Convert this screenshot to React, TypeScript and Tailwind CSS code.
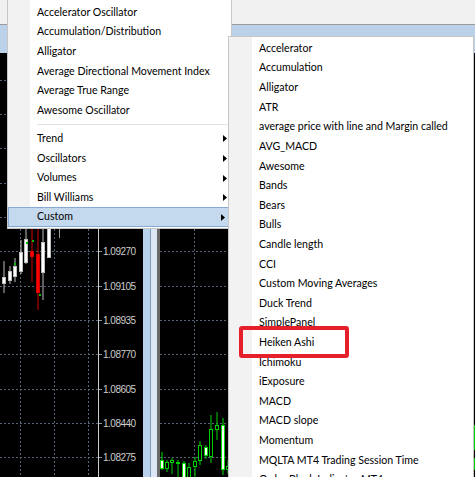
import React from 'react';

const topItems = [
  'Accelerator Oscillator',
  'Accumulation/Distribution',
  'Alligator',
  'Average Directional Movement Index',
  'Average True Range',
  'Awesome Oscillator',
];

const groupItems = ['Trend', 'Oscillators', 'Volumes', 'Bill Williams', 'Custom'];

const customItems = [
  'Accelerator',
  'Accumulation',
  'Alligator',
  'ATR',
  'average price with line and Margin called',
  'AVG_MACD',
  'Awesome',
  'Bands',
  'Bears',
  'Bulls',
  'Candle length',
  'CCI',
  'Custom Moving Averages',
  'Duck Trend',
  'SimplePanel',
  'Heiken Ashi',
  'Ichimoku',
  'iExposure',
  'MACD',
  'MACD slope',
  'Momentum',
  'MQLTA MT4 Trading Session Time',
  'Order Block Indicator MT4',
];

// grid rows shared by both charts (page y)
const gridY = [80, 114, 148, 183, 217, 251, 286, 320, 354, 389, 423, 457];
const prices = [
  { y: 251, label: '1.09270' },
  { y: 286, label: '1.09105' },
  { y: 320, label: '1.08935' },
  { y: 354, label: '1.08770' },
  { y: 389, label: '1.08605' },
  { y: 423, label: '1.08440' },
  { y: 457, label: '1.08275' },
];

type Candle = { x: number; o: number; c: number; h: number; l: number; fill: string; line: string };

const leftCandles: Candle[] = [
  { x: 2, o: 277, c: 284, h: 261, l: 293, fill: '#ffffff', line: '#bdbdbd' },
  { x: 8, o: 271, c: 281, h: 266, l: 284, fill: '#ffffff', line: '#bdbdbd' },
  { x: 13, o: 266, c: 277, h: 258, l: 282, fill: '#ffffff', line: '#bdbdbd' },
  { x: 19, o: 252, c: 272, h: 240, l: 274, fill: '#ffffff', line: '#bdbdbd' },
  { x: 24, o: 239, c: 263, h: 226, l: 264, fill: '#ffffff', line: '#bdbdbd' },
  { x: 30, o: 251, c: 257, h: 226, l: 282, fill: '#ff0000', line: '#d00000' },
  { x: 36, o: 254, c: 293, h: 226, l: 310, fill: '#ff0000', line: '#d00000' },
  { x: 41, o: 242, c: 273, h: 226, l: 300, fill: '#ffffff', line: '#bdbdbd' },
  { x: 47, o: 226, c: 258, h: 226, l: 258, fill: '#ffffff', line: '#bdbdbd' },
];

const rightCandles: Candle[] = [
  { x: 160, o: 460, c: 469, h: 452, l: 470, fill: '#ffffff', line: '#00e000' },
  { x: 165, o: 462, c: 469, h: 460, l: 472, fill: '#000000', line: '#00d000' },
  { x: 170, o: 460, c: 463, h: 458, l: 474, fill: '#000000', line: '#00d000' },
  { x: 176, o: 462, c: 464, h: 460, l: 477, fill: '#000000', line: '#00d000' },
  { x: 182, o: 463, c: 478, h: 461, l: 478, fill: '#ffffff', line: '#00e000' },
  { x: 187, o: 467, c: 478, h: 463, l: 478, fill: '#000000', line: '#00d000' },
  { x: 193, o: 461, c: 467, h: 457, l: 477, fill: '#000000', line: '#00d000' },
  { x: 198, o: 445, c: 461, h: 441, l: 465, fill: '#000000', line: '#00d000' },
  { x: 204, o: 447, c: 456, h: 445, l: 459, fill: '#ffffff', line: '#00d000' },
  { x: 209, o: 429, c: 457, h: 415, l: 463, fill: '#000000', line: '#00d000' },
  { x: 215, o: 425, c: 430, h: 412, l: 440, fill: '#000000', line: '#00d000' },
  { x: 221, o: 425, c: 470, h: 418, l: 475, fill: '#ffffff', line: '#00e000' },
  { x: 226, o: 466, c: 470, h: 460, l: 474, fill: '#000000', line: '#00d000' },
];

function Candles({ items }: { items: Candle[] }) {
  return (
    <>
      {items.map((k, i) => (
        <g key={i}>
          <line x1={k.x + 2} x2={k.x + 2} y1={k.h} y2={k.l} stroke={k.line} strokeWidth={1} />
          <rect x={k.x + 0.5} y={k.o + 0.5} width={3} height={k.c - k.o - 1} fill={k.fill} stroke={k.line} strokeWidth={1} />
        </g>
      ))}
    </>
  );
}

function Arrow() {
  return (
    <svg width="4" height="7" viewBox="0 0 4 7">
      <polygon points="0,0 4,3.5 0,7" fill="#000" />
    </svg>
  );
}

function MenuRow({ label, arrow, active }: { label: string; arrow?: boolean; active?: boolean }) {
  return (
    <div
      className={`flex h-[19.62px] items-center justify-between border pl-[28px] pr-[3px] ${
        active ? 'mr-[2px] border-[#86aad3] bg-[#c4d9ed]' : 'border-transparent'
      }`}
    >
      <span className="whitespace-nowrap">{label}</span>
      {arrow && <Arrow />}
    </div>
  );
}

export default function App() {
  return (
    <div className="relative h-[477px] w-[475px] overflow-hidden bg-black font-['Lato',sans-serif] text-[10.6px] text-black">
      {/* toolbar + chart title band */}
      <div className="h-[25px] border-b border-[#9a9a9a] bg-[#f0f0f0]" />
      <div className="h-[28px] bg-[#bad1e9]" />

      {/* charts */}
      <div className="flex h-[424px]">
        <div className="w-[143px]">
          <svg width="143" height="424" viewBox="0 53 143 424" className="block">
            {gridY.map((y) => (
              <line key={y} x1="0" x2="98" y1={y + 0.5} y2={y + 0.5} stroke="#566474" strokeDasharray="2 2" />
            ))}
            {gridY.map((y) => (
              <line key={'t' + y} x1="99" x2="102" y1={y + 0.5} y2={y + 0.5} stroke="#8a96a3" />
            ))}
            {[20, 54, 88].map((x) => (
              <line key={x} x1={x + 0.5} x2={x + 0.5} y1="53" y2="477" stroke="#566474" strokeDasharray="2 2" />
            ))}
            <line x1="98.5" x2="98.5" y1="53" y2="477" stroke="#cfcfcf" />
            <Candles items={leftCandles} />
            <line x1="59.5" x2="59.5" y1="226" y2="238" stroke="#9a9a9a" />
            <rect x="14" y="263" width="2" height="2" fill="#00c000" />
            <rect x="26" y="242" width="2" height="2" fill="#00c000" />
            <rect x="39" y="294" width="2" height="2" fill="#00c000" />
            <rect x="32" y="240" width="2" height="2" fill="#00c000" />
            {prices.map((p) => (
              <text
                key={p.label}
                x="103"
                y={p.y + 4}
                fill="#cdcdcd"
                fontSize="10"
                letterSpacing="-0.5"
                fontFamily="'Liberation Sans', Arial, sans-serif"
              >
                {p.label}
              </text>
            ))}
          </svg>
        </div>

        {/* window frames between the two charts */}
        <div className="flex w-[17px]">
          <div className="w-[7px] bg-[#b9d1ea]" />
          <div className="w-px bg-[#7f9cc0]" />
          <div className="w-[6px] bg-[#dce7f3]" />
          <div className="w-[3px] bg-[#6a6a6a]" />
        </div>

        <div className="flex-1">
          <svg width="315" height="424" viewBox="160 53 315 424" className="block">
            {gridY.map((y) => (
              <line key={y} x1="160" x2="475" y1={y + 0.5} y2={y + 0.5} stroke="#566474" strokeDasharray="2 2" />
            ))}
            {[194, 228].map((x) => (
              <line key={x} x1={x + 0.5} x2={x + 0.5} y1="53" y2="477" stroke="#566474" strokeDasharray="2 2" />
            ))}
            <Candles items={rightCandles} />
            <line x1="474.5" x2="474.5" y1="425" y2="450" stroke="#00d000" />
            <line x1="474.5" x2="474.5" y1="458" y2="470" stroke="#00d000" />
          </svg>
        </div>
      </div>

      {/* Insert > Indicators menu */}
      <div className="absolute left-[7px] top-[-1px] z-10 w-[225px] border border-[#c6c6c6] bg-[linear-gradient(to_right,#f2f2f2_22px,#ffffff_22px)] pb-[1px] pt-[3px]">
        {topItems.map((t) => (
          <MenuRow key={t} label={t} />
        ))}
        <div className="flex h-[8.4px] items-center">
          <div className="ml-[29px] mr-[3px] h-px flex-1 bg-[#e3e3e3]" />
        </div>
        {groupItems.map((t) => (
          <MenuRow key={t} label={t} arrow active={t === 'Custom'} />
        ))}
      </div>

      {/* Custom submenu */}
      <div className="absolute left-[228px] top-[36px] z-20 w-[246px] border border-[#c6c6c6] bg-[linear-gradient(to_right,#f2f2f2_23px,#ffffff_23px)] pt-[2px]">
        {customItems.map((t) => (
          <div key={t} className="flex h-[19.62px] items-center pl-[30px]">
            <span className="whitespace-nowrap">{t}</span>
          </div>
        ))}
      </div>

      {/* red marker around Heiken Ashi */}
      <div className="absolute left-[239px] top-[326px] z-30 h-[32px] w-[110px] rounded-[3px] border-4 border-[#e5202b]" />
    </div>
  );
}
